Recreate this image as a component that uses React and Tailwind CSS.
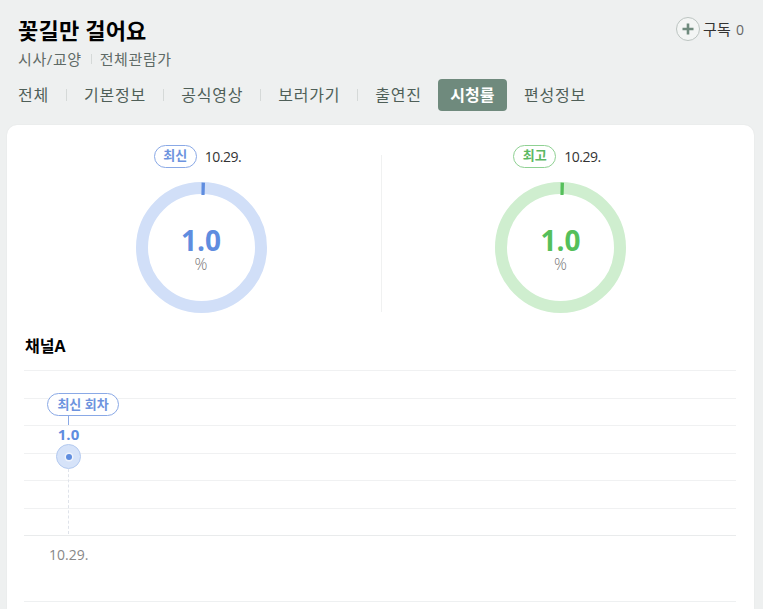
const Sans = "font-['Open_Sans','Noto_Sans_CJK_KR',sans-serif]";

function Gauge({ label, tone, width }) {
  const blue = tone === "blue";
  const strong = blue ? "#5f8ddf" : "#55bf5b";
  const soft = blue ? "#d1dff8" : "#cfeecf";
  return (
    <div className={`flex flex-none flex-col items-center ${width}`}>
      <div className="flex h-[24px] items-center gap-[8px] pr-[7px]">
        <span
          className={
            blue
              ? "flex h-[23px] w-[43px] items-center justify-center rounded-full border border-[#8aa9e6] bg-white text-[13px] font-bold text-[#6d93de]"
              : "flex h-[23px] w-[43px] items-center justify-center rounded-full border border-[#8fd193] bg-white text-[13px] font-bold text-[#5cb862]"
          }
        >
          {label}
        </span>
        <span className="text-[14px] tracking-[-0.5px] text-[#333]">10.29.</span>
      </div>
      <div className="relative mt-[14px] h-[131px] w-[131px]">
        <svg width="131" height="131" viewBox="0 0 131 131">
          <circle cx="65.5" cy="65.5" r="59.5" fill="none" stroke={soft} strokeWidth="12" />
          <path d="M65.6 0.6 L69 0.7 L68.6 13 L65.4 13 Z" fill={strong} />
        </svg>
        <div className="absolute inset-0 flex flex-col items-center pt-[44px]">
          <span className={blue ? "text-[28px] leading-[28px] font-bold text-[#5f8ddf]" : "text-[28px] leading-[28px] font-bold text-[#55bf5b]"}>1.0</span>
          <span className="text-[16px] leading-[20px] font-light text-[#777]">%</span>
        </div>
      </div>
    </div>
  );
}

const tabs = ["전체", "기본정보", "공식영상", "보러가기", "출연진"];

export default function App() {
  return (
    <div className={`${Sans} h-[609px] w-[763px] overflow-hidden bg-[#eef0f0]`}>
      <header className="relative h-[125px] px-[18px] pt-[16px]">
        <h1 className="text-[22px] leading-[29px] font-bold tracking-[0.2px] text-black">꽃길만 걸어요</h1>
        <div className="mt-[4px] flex h-[20px] items-center text-[15px] tracking-[0.6px] text-[#5e6a66]">
          <span>시사/교양</span>
          <span className="mr-[8px] ml-[9px] h-[10px] w-px bg-[#d5d9d8]" />
          <span>전체관람가</span>
        </div>
        <nav className="mt-[10px] flex h-[32px] items-center text-[16px] tracking-[0.8px] text-[#4f5f58]">
          {tabs.map((t, i) => (
            <div key={t} className="flex items-center">
              <span>{t}</span>
              {i < 4 && <span className="mx-[17px] h-[12px] w-px bg-[#d5d9d8]" />}
            </div>
          ))}
          <span className="ml-[16px] flex h-[32px] w-[69px] items-center justify-center rounded-[4px] bg-[#6f8a7d] font-bold tracking-[0px] text-white">시청률</span>
          <span className="ml-[17px]">편성정보</span>
        </nav>
        <div className="absolute top-[17px] right-[19px] flex items-center">
          <span className="flex h-[24px] w-[24px] items-center justify-center rounded-full border border-[#bcc4c1] bg-[#f3f5f4]">
            <svg width="14" height="14" viewBox="0 0 14 14">
              <path d="M7 1.5V12.5M1.5 7H12.5" stroke="#6f8a7d" strokeWidth="2.6" />
            </svg>
          </span>
          <span className="ml-[3px] text-[15px] tracking-[0.2px] text-[#333]">구독</span>
          <span className="ml-[5px] text-[14px] text-[#666]">0</span>
        </div>
      </header>
      <main className="ml-[7px] h-[484px] w-[747px] rounded-t-[10px] bg-white px-[17px] pt-[19px] shadow-[0_0_2px_rgba(0,0,0,0.06)]">
        <section className="flex h-[170px]">
          <Gauge label="최신" tone="blue" width="w-[354px]" />
          <div className="mt-[11px] ml-[3px] h-[157px] w-px flex-none bg-[#f0f1f1]" />
          <Gauge label="최고" tone="green" width="w-[357px]" />
        </section>
        <h2 className="mt-[21px] ml-[1px] text-[16px] leading-[22px] font-bold text-black">채널A</h2>
        <div className="relative mt-[13px] mr-[1px]">
          {[0, 1, 2, 3, 4, 5].map((i) => (
            <div key={i} className="h-[27.5px] border-t border-[#f0f1f2]" />
          ))}
          <div className="border-t border-[#e9ebec] pt-[9px] pl-[25px] text-[14px] leading-[20px] text-[#888]">10.29.</div>
          <div className="mt-[36px] border-t border-[#eef0f1]" />
          <div className="absolute top-[23px] left-[23px] flex w-[72px] flex-col items-start">
            <span className="flex h-[23px] w-[72px] items-center justify-center rounded-full border border-[#8aa9e6] bg-white text-[13px] font-bold whitespace-nowrap text-[#6d93de]">최신 회차</span>
            <span className="ml-[21px] h-[9px] w-px bg-[#8aa9e6]" />
            <span className="ml-[10px] w-[23px] text-center text-[15px] leading-[18px] font-bold text-[#5f8ddf]">1.0</span>
            <span className="mt-[1px] ml-[9px] flex h-[25px] w-[25px] items-center justify-center rounded-full border border-[#b4caf0] bg-[#d6e3f9]">
              <span className="h-[6px] w-[6px] rounded-full bg-[#5f8ddf] shadow-[0_0_0_1.5px_#eef3fc]" />
            </span>
            <span className="ml-[21px] h-[65px] border-l border-dashed border-[#dfe3ea]" />
          </div>
        </div>
      </main>
    </div>
  );
}
